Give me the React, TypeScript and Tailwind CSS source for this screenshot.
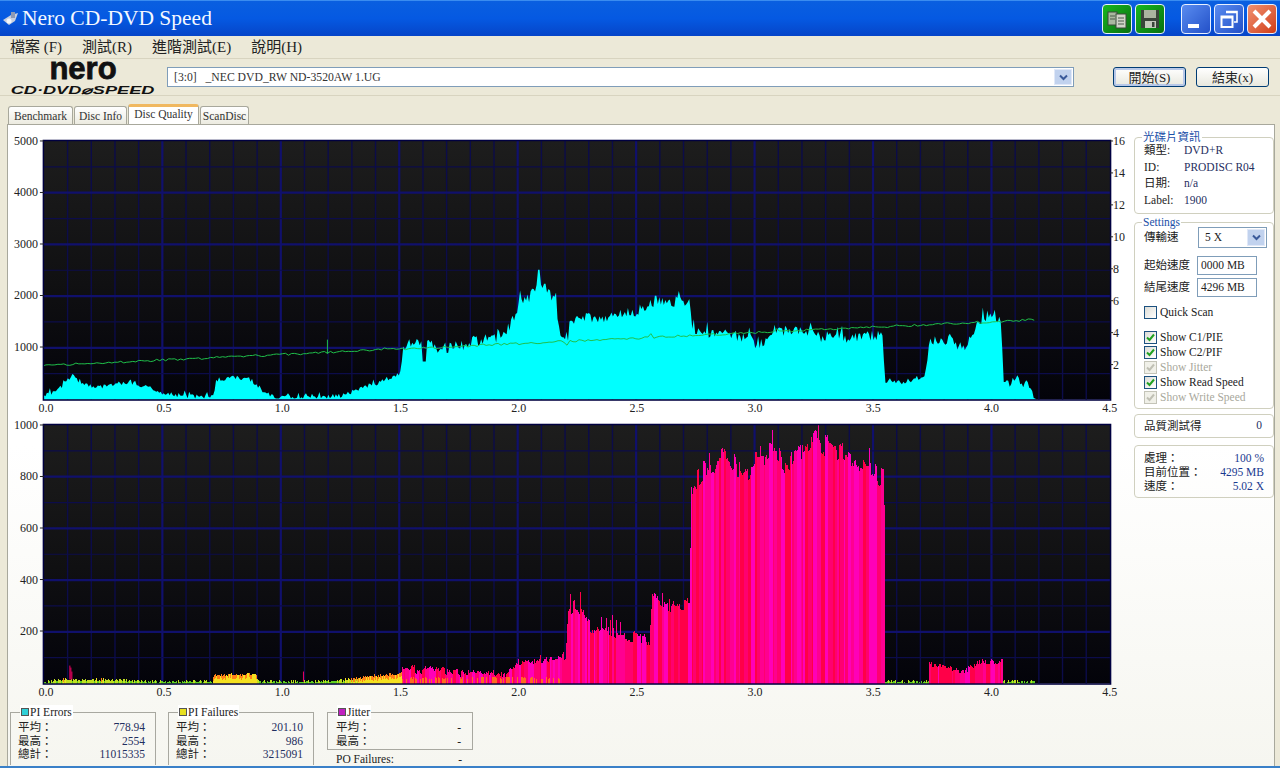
import React from "react";

const FONT = "font-['Liberation_Serif','Noto_Sans_CJK_TC',serif]";

function rng(seed: number) {
  let s = seed;
  return () => {
    s = (s * 1664525 + 1013904223) % 4294967296;
    return s / 4294967296;
  };
}

function interp(points: number[][], x: number) {
  for (let i = 1; i < points.length; i++) {
    if (x <= points[i][0]) {
      const [x0, y0] = points[i - 1];
      const [x1, y1] = points[i];
      if (x1 === x0) return y1;
      return y0 + ((y1 - y0) * (x - x0)) / (x1 - x0);
    }
  }
  return points[points.length - 1][1];
}

// chart outlines, read off the picture in page pixels
const PIE: number[][] = [
  [43, 397], [52, 392], [60, 388], [72, 375], [80, 384], [95, 388], [115, 384], [135, 383], [150, 390], [170, 395], [190, 397],
  [213, 397], [215, 381], [230, 377], [250, 380], [262, 391], [275, 398], [300, 398], [340, 396], [365, 388], [395, 376], [401, 372],
  [402, 346], [425, 342], [440, 350], [460, 346], [475, 341], [500, 337], [510, 325], [520, 303], [528, 300], [535, 290], [543, 290],
  [556, 298], [559, 335], [568, 336], [570, 319], [590, 318], [610, 318], [635, 312], [655, 303], [675, 302], [690, 302],
  [693, 332], [720, 335], [745, 337], [760, 346], [775, 331], [800, 330], [825, 338], [850, 338], [884, 335], [885, 383],
  [900, 383], [925, 378], [930, 341], [950, 340], [965, 351], [982, 320], [992, 313], [1002, 320], [1004, 386], [1020, 380], [1030, 388], [1037, 396],
];

const PIF: number[][] = [
  [402, 669], [440, 670], [480, 674], [505, 672], [520, 662], [565, 655], [568, 612], [578, 602], [590, 625], [620, 630], [650, 638],
  [653, 590], [670, 610], [690, 600], [692, 482], [720, 452], [745, 470], [770, 446], [790, 462], [815, 436], [850, 456], [884, 476], [885, 510], [885.5, 684],
];

const LOW: number[][] = [
  [43, 683], [60, 680], [110, 680], [150, 682], [212, 682], [214, 675], [256, 675], [258, 682], [300, 682], [340, 681], [360, 678], [385, 675], [402, 674],
];

const PIF_TAIL: number[][] = [
  [886, 682], [928, 681], [930, 662], [945, 664], [962, 670], [980, 660], [1003, 658], [1004, 682], [1036, 682],
];

function Grid({ top }: { top: number }) {
  const v: React.ReactNode[] = [];
  for (let i = 1; i < 45; i++) {
    const x = 43 + i * 23.73;
    const major = i % 5 === 0;
    v.push(<line key={"v" + i} x1={x} x2={x} y1={top} y2={top + 259} stroke={major ? "#10106c" : "#0c0c4a"} strokeWidth={major ? 2.2 : 1.4} />);
  }
  for (let i = 1; i < 10; i++) {
    const y = top + i * 25.9;
    const major = i % 2 === 0;
    v.push(<line key={"h" + i} x1={43} x2={1111} y1={y} y2={y} stroke={major ? "#10106c" : "#0c0c4a"} strokeWidth={major ? 2.2 : 1.2} />);
  }
  return <>{v}</>;
}

function Labels({ top, left, right }: { top: number; left: string[]; right?: string[] }) {
  const xs = ["0.0", "0.5", "1.0", "1.5", "2.0", "2.5", "3.0", "3.5", "4.0", "4.5"];
  return (
    <g fontSize={12} fill="#222" fontFamily="'Liberation Serif','Noto Sans CJK TC',serif">
      {left.map((t, i) => (
        <g key={t}>
          <path d={`M39 ${top + i * 51.6}H43`} stroke="#222" />
          <text x={37} y={top + 4 + i * 51.6} textAnchor="end">{t}</text>
        </g>
      ))}
      {(right ?? []).map((t, i) => (
        <g key={t}>
          <path d={`M1111 ${top + i * 32}H1114`} stroke="#222" />
          <text x={1114} y={top + 4 + i * 32} textAnchor="start">{t}</text>
        </g>
      ))}
      {xs.map((t, i) => (
        <text key={t} x={45 + i * 118.4} y={top + 271} textAnchor="middle">{t}</text>
      ))}
    </g>
  );
}

function Backdrop({ id, top }: { id: string; top: number }) {
  return (
    <>
      <defs>
        <linearGradient id={id} x1="0" y1="0" x2="0" y2="1">
          <stop offset="0" stopColor="#1d1d1d" />
          <stop offset="0.55" stopColor="#101012" />
          <stop offset="1" stopColor="#03030a" />
        </linearGradient>
      </defs>
      <rect x={43} y={top} width={1068} height={259} fill={`url(#${id})`} />
    </>
  );
}

function TopChart() {
  const r = rng(7);
  let d = "M43 400";
  for (let x = 43; x <= 1037; x += 1.5) {
    let y = interp(PIE, x);
    const amp = x < 400 ? 3 : x > 885 && x < 928 ? 3 : 7;
    y += (r() - 0.5) * amp * 1.6 + (r() > 0.93 ? -amp : 0);
    if (x >= 538 && x < 540) y = 270;
    if (x >= 543 && x < 546) y = 284;
    if (x >= 655 && x < 657) y = 296;
    if (x >= 422 && x < 426) y = 362;
    d += ` L${x} ${Math.min(399, y).toFixed(1)}`;
  }
  d += " L1037 400 Z";
  const r2 = rng(21);
  let line = "M43 366";
  for (let x = 45; x <= 1035; x += 3) {
    const y = 366 - ((x - 43) / 992) * 46 + (r2() - 0.5) * 2.2 + (r2() > 0.97 ? (r2() - 0.5) * 6 : 0);
    line += ` L${x} ${y.toFixed(1)}`;
  }
  return (
    <svg width={1127} height={293} viewBox="7 124 1127 293" className="block">
      <Backdrop id="topbg" top={141} />
      <Grid top={141} />
      <path d={d} fill="#00ffff" />
      <path d={line} fill="none" stroke="#1fc04a" strokeWidth={1} />
      <path d="M327 340 V354" stroke="#1fc04a" />
      <rect x={42.5} y={140.5} width={1069} height={260} fill="none" stroke="#000040" strokeWidth={1.5} />
      <Labels top={141} left={["5000", "4000", "3000", "2000", "1000"]} right={["16", "14", "12", "10", "8", "6", "4", "2"]} />
    </svg>
  );
}

function BottomChart() {
  const r = rng(11);
  const colors = ["#ff0090", "#ff00b8", "#ff0048", "#ff0070"];
  const paths: string[] = ["", "", "", ""];
  let left = 0;
  let c = 0;
  let off = 0;
  for (let x = 402; x <= 885; x++) {
    if (left-- <= 0) {
      c = Math.floor(r() * 4);
      left = Math.floor(r() * 4);
      off = (r() - 0.35) * (x > 692 ? 22 : x > 568 ? 14 : 6);
    }
    const base = interp(PIF, x);
    const spike = x > 568 && r() > 0.94 ? -14 : 0;
    const y = Math.min(683, base + off + spike + (r() - 0.5) * 4);
    paths[c] += `M${x} ${y.toFixed(1)}V684`;
  }
  for (let x = 930; x <= 1003; x++) {
    if (left-- <= 0) {
      c = Math.floor(r() * 4);
      left = Math.floor(r() * 5);
    }
    const y = interp(PIF_TAIL, x) + r() * 6;
    paths[c] += `M${x} ${y.toFixed(1)}V684`;
  }
  let green = "";
  let yellow = "";
  let orange = "";
  let lime = "";
  const column = (x: number, base: number) => {
    const y = Math.min(683, base + (r() - 0.5) * 3);
    const h = 684 - y;
    if (h < 3) {
      green += `M${x} ${y.toFixed(1)}V684`;
    } else if (h < 5) {
      lime += `M${x} ${y.toFixed(1)}V684`;
    } else {
      yellow += `M${x} ${(y + 2).toFixed(1)}V684`;
      if (r() > 0.35) orange += `M${x} ${y.toFixed(1)}V${(y + 4).toFixed(1)}`;
      else yellow += `M${x} ${y.toFixed(1)}V${(y + 2).toFixed(1)}`;
    }
  };
  for (let x = 43; x < 402; x++) column(x, interp(LOW, x));
  for (let x = 886; x < 930; x++) column(x, 682);
  for (let x = 1004; x < 1036; x++) column(x, 682);
  let foot = "";
  for (let x = 402; x < 560; x += 1) {
    if (r() > 0.6) foot += `M${x} ${(680 - r() * 3).toFixed(1)}V684`;
  }
  return (
    <svg width={1127} height={289} viewBox="7 417 1127 289" className="block">
      <Backdrop id="botbg" top={425} />
      <Grid top={425} />
      {paths.map((p, i) => (
        <path key={i} d={p} stroke={colors[i]} strokeWidth={1} shapeRendering="crispEdges" />
      ))}
      <path d={green} stroke="#60d020" shapeRendering="crispEdges" />
      <path d={lime} stroke="#c0e020" shapeRendering="crispEdges" />
      <path d={yellow} stroke="#f4e020" shapeRendering="crispEdges" />
      <path d={orange} stroke="#ff8018" shapeRendering="crispEdges" />
      <path d={foot} stroke="#ff6a20" shapeRendering="crispEdges" />
      <path d="M69 666V680M70 668V680M71 672V680M303 672V682" stroke="#f00060" />
      <rect x={42.5} y={424.5} width={1069} height={260} fill="none" stroke="#000040" strokeWidth={1.5} />
      <Labels top={425} left={["1000", "800", "600", "400", "200"]} />
    </svg>
  );
}

function Check({ label, on, disabled }: { label: string; on?: boolean; disabled?: boolean }) {
  return (
    <div className={`flex items-center gap-[2px] h-[15px] ${disabled ? "text-[#a8a89c]" : "text-[#222]"}`}>
      <span className={`flex items-center justify-center w-[13px] h-[13px] border ${disabled ? "border-[#c4c4b8] bg-[#f0f0e8]" : "border-[#1c5180] bg-gradient-to-br from-[#dcdcd6] to-white"}`}>
        {on && (
          <svg width="9" height="9" viewBox="0 0 9 9">
            <path d="M1 4.5 L3.5 7 L8 1.5" fill="none" stroke={disabled ? "#c0c0b4" : "#21a121"} strokeWidth="2" />
          </svg>
        )}
      </span>
      <span className="pl-[1px]">{label}</span>
    </div>
  );
}

function Group({ legend, className, children }: { legend?: React.ReactNode; className: string; children: React.ReactNode }) {
  return (
    <div className={`relative border border-[#d0d0bf] rounded-[4px] ${className}`}>
      {legend}
      {children}
    </div>
  );
}

function Legend({ text }: { text: string }) {
  return <span className="absolute left-[7px] top-[-8px] bg-white px-[1px] leading-[14px] text-[#1a4fa8]">{text}</span>;
}

function Chevron() {
  return (
    <span className="flex items-center justify-center w-[18px] h-full bg-[#c1d2ee] border border-[#e0e8f8]">
      <svg width="9" height="7" viewBox="0 0 9 7">
        <path d="M1 1.5 L4.5 5 L8 1.5" fill="none" stroke="#3a5a9a" strokeWidth="2" />
      </svg>
    </span>
  );
}

function Stat({ name, swatch, rows }: { name: string; swatch: string; rows: string[][] }) {
  return (
    <div className="relative w-[146px] h-[53px] border border-b-0 border-[#a8a8a0] pt-[8px] pl-[7px] pr-[10px]">
      <span className="absolute left-[9px] top-[-8px] flex items-center gap-[1px] bg-white px-[1px] leading-[14px] text-[#222]">
        <span className={`w-[8px] h-[8px] border border-[#555] ${swatch}`} />
        {name}
      </span>
      {rows.map(([k, v]) => (
        <div key={k} className="flex justify-between h-[13.5px] leading-[13.5px] text-[#222]">
          <span>{k}</span>
          <span className="text-[#1f2f5f]">{v}</span>
        </div>
      ))}
    </div>
  );
}

function WinBtn({ className, children }: { className: string; children: React.ReactNode }) {
  return (
    <div className={`flex items-center justify-center w-[30px] h-[30px] rounded-[4px] border border-[#e8f0ff] ${className}`}>
      {children}
    </div>
  );
}

export default function App() {
  return (
    <div className={`w-[1280px] h-[768px] overflow-hidden flex flex-col bg-[#ece9d8] text-[11.5px] ${FONT}`}>
      <div className="h-[36px] shrink-0 flex items-center bg-gradient-to-b from-[#0a5fe0] via-[#0559e2] to-[#0645c8] border-t border-[#3a8cf0]">
        <svg width="18" height="18" viewBox="0 0 18 18" className="ml-[2px]">
          <path d="M1 10 L9 5 L16 3 L13 11 L7 15 Z" fill="#c6cfe0" />
          <path d="M9 2 L13 2 L13 8 L9 8 Z" fill="#8d9ab5" />
          <circle cx="7" cy="11" r="2.5" fill="#f4f6fa" />
        </svg>
        <span className="ml-[2px] -mt-[1px] text-[21.5px] text-[#f4f8ff]">Nero CD-DVD Speed</span>
        <div className="ml-auto flex items-center gap-[3px] pr-[3px]">
          <WinBtn className="bg-gradient-to-br from-[#18b820] to-[#087010]">
            <svg width="22" height="20" viewBox="0 0 22 20">
              <rect x="2" y="3" width="9" height="13" fill="#aab8a0" stroke="#3a4a3a" />
              <rect x="10" y="5" width="10" height="14" fill="#d0d4c8" stroke="#3a4a3a" />
              <path d="M12 9H18M12 12H18M12 15H18M4 7H9M4 10H9" stroke="#4a5a4a" />
            </svg>
          </WinBtn>
          <WinBtn className="bg-gradient-to-br from-[#18b820] to-[#087010] mr-[13px]">
            <svg width="22" height="22" viewBox="0 0 22 22">
              <path d="M2 2H20V20H2Z" fill="#3a443a" />
              <rect x="5" y="2" width="12" height="8" fill="#aab4a0" />
              <rect x="6" y="13" width="11" height="7" fill="#c4c8bc" />
              <rect x="13" y="14" width="2.5" height="5" fill="#3a443a" />
            </svg>
          </WinBtn>
          <WinBtn className="bg-gradient-to-br from-[#5a8cf0] to-[#2450c8]">
            <span className="w-[11px] h-[4px] bg-white mt-[14px] mr-[6px]" />
          </WinBtn>
          <WinBtn className="bg-gradient-to-br from-[#5a8cf0] to-[#2450c8]">
            <svg width="20" height="20" viewBox="0 0 20 20" fill="none" stroke="#fff">
              <path d="M2.5 7.5H13.5V18H2.5Z M2.5 8.5H13.5" strokeWidth="2" />
              <path d="M7 2.5H18V13H15 M7 3.5H18" strokeWidth="1.6" />
            </svg>
          </WinBtn>
          <WinBtn className="bg-gradient-to-br from-[#f09070] to-[#d03a10]">
            <svg width="20" height="20" viewBox="0 0 20 20">
              <path d="M2 2 L18 18 M18 2 L2 18" stroke="#fff" strokeWidth="4" />
            </svg>
          </WinBtn>
        </div>
      </div>

      <div className="h-[22px] shrink-0 flex items-center pl-[10px] gap-[20px] text-[15px] text-[#222]">
        <span>檔案 (F)</span>
        <span>測試(R)</span>
        <span>進階測試(E)</span>
        <span>說明(H)</span>
      </div>

      <div className="h-[38px] shrink-0 flex items-center border-t border-b border-[#d8d4c0] pl-[10px] pr-[11px]">
        <div className="w-[146px] flex flex-col items-center text-[#111] font-['Liberation_Sans',sans-serif]">
          <span className="text-[31px] font-bold h-[20px] leading-[20px] [-webkit-text-stroke:0.8px_#111]">nero</span>
          <span className="mt-[6px] text-[11px] font-bold italic h-[10px] leading-[10px] whitespace-nowrap scale-x-[1.65]">CD·DVD⌀SPEED</span>
        </div>
        <div className="ml-[11px] w-[907px] h-[20px] flex items-center justify-between bg-white border border-[#7f9db9] pl-[6px] pr-[1px] py-[1px] text-[11.7px] text-[#333]">
          <span className="whitespace-pre pt-[2px]">[3:0]   _NEC DVD_RW ND-3520AW 1.UG</span>
          <Chevron />
        </div>
        <div className="ml-auto flex gap-[10px]">
          <button className="w-[73px] h-[20px] rounded-[3px] border border-[#003c74] bg-gradient-to-b from-white to-[#e8e8de] shadow-[inset_0_0_0_2px_#b8c8e8] text-[13px] text-[#222]">開始(S)</button>
          <button className="w-[73px] h-[20px] rounded-[3px] border border-[#003c74] bg-gradient-to-b from-white to-[#e8e8de] text-[13px] text-[#222]">結束(x)</button>
        </div>
      </div>

      <div className="h-[28px] shrink-0 flex items-end pl-[8px] gap-[1px] text-[#333]">
        <span className="w-[65px] h-[18px] text-center leading-[18px] border border-b-0 border-[#a8a89c] rounded-t-[3px] bg-gradient-to-b from-white to-[#ecebe0]">Benchmark</span>
        <span className="w-[53px] h-[18px] text-center leading-[18px] border border-b-0 border-[#a8a89c] rounded-t-[3px] bg-gradient-to-b from-white to-[#ecebe0]">Disc Info</span>
        <span className="w-[71px] h-[20px] text-center leading-[15px] border border-b-0 border-[#a8a89c] border-t-[3px] border-t-[#f0b860] rounded-t-[3px] bg-white">Disc Quality</span>
        <span className="w-[49px] h-[18px] text-center leading-[18px] border border-b-0 border-[#a8a89c] rounded-t-[3px] bg-gradient-to-b from-white to-[#ecebe0]">ScanDisc</span>
      </div>

      <div className="ml-[7px] mr-[5px] flex-1 min-h-0 flex bg-gradient-to-b from-white via-white to-[#f6f6f0] border-t border-l border-r border-[#a8a89c]">
        <div className="w-[1127px] shrink-0 flex flex-col -mt-[1px] -ml-[1px]">
          <TopChart />
          <BottomChart />
          <div className="flex pl-[3px] gap-[12px] pt-[7px]">
            <Stat name="PI Errors" swatch="bg-[#30d0d8]" rows={[["平均：", "778.94"], ["最高：", "2554"], ["總計：", "11015335"]]} />
            <Stat name="PI Failures" swatch="bg-[#e8e020]" rows={[["平均：", "201.10"], ["最高：", "986"], ["總計：", "3215091"]]} />
            <div className="w-[146px] ml-[1px]">
              <div className="relative h-[38px] border border-[#a8a8a0] pt-[8px] pl-[8px] pr-[11px]">
                <span className="absolute left-[9px] top-[-8px] flex items-center gap-[1px] bg-white px-[1px] leading-[14px] text-[#222]">
                  <span className="w-[8px] h-[8px] border border-[#555] bg-[#c020c0]" />
                  Jitter
                </span>
                <div className="flex justify-between h-[13.5px] leading-[13.5px] text-[#222]"><span>平均：</span><span>-</span></div>
                <div className="flex justify-between h-[13.5px] leading-[13.5px] text-[#222]"><span>最高：</span><span>-</span></div>
              </div>
              <div className="flex justify-between pl-[9px] pr-[11px] pt-[2px] leading-[14px] text-[#222]"><span>PO Failures:</span><span>-</span></div>
            </div>
          </div>
        </div>

        <div className="flex-1 min-w-0 pt-[12px] flex flex-col">
          <Group className="w-[140px] h-[77px] pt-[4px] pl-[9px] text-[#222]" legend={<Legend text="光碟片資訊" />}>
            {[["類型:", "DVD+R"], ["ID:", "PRODISC R04"], ["日期:", "n/a"], ["Label:", "1900"]].map(([k, v]) => (
              <div key={k} className="flex h-[16.6px] leading-[16.6px]">
                <span className="w-[40px]">{k}</span>
                <span className="text-[#1f2f5f]">{v}</span>
              </div>
            ))}
          </Group>

          <Group className="mt-[8px] w-[140px] h-[187px] pl-[9px] pt-[4px] text-[#222]" legend={<Legend text="Settings" />}>
            <div className="flex items-center h-[21px]">
              <span className="w-[54px]">傳輸速</span>
              <div className="w-[69px] h-[21px] flex items-center justify-between border border-[#7f9db9] pl-[6px] pr-[1px] py-[1px]">
                <span>5 X</span>
                <Chevron />
              </div>
            </div>
            <div className="flex items-center h-[19px] mt-[8px]">
              <span className="w-[53px]">起始速度</span>
              <span className="w-[60px] h-[19px] border border-[#7f9db9] pl-[3px] leading-[17px]">0000 MB</span>
            </div>
            <div className="flex items-center h-[19px] mt-[3px]">
              <span className="w-[53px]">結尾速度</span>
              <span className="w-[60px] h-[19px] border border-[#7f9db9] pl-[3px] leading-[17px]">4296 MB</span>
            </div>
            <div className="mt-[8px]">
              <Check label="Quick Scan" />
            </div>
            <div className="mt-[10px] flex flex-col">
              <Check label="Show C1/PIE" on />
              <Check label="Show C2/PIF" on />
              <Check label="Show Jitter" on disabled />
              <Check label="Show Read Speed" on />
              <Check label="Show Write Speed" on disabled />
            </div>
          </Group>

          <Group className="mt-[5px] w-[140px] h-[24px] flex items-center justify-between pl-[9px] pr-[11px] text-[#222]">
            <span className="pt-[1px]">品質測試得</span>
            <span className="text-[#1f2f5f]">0</span>
          </Group>

          <Group className="mt-[7px] w-[140px] h-[53px] pt-[5px] pl-[9px] pr-[9px] text-[#222]">
            {[["處理：", "100 %"], ["目前位置：", "4295 MB"], ["速度：", "5.02 X"]].map(([k, v]) => (
              <div key={k} className="flex justify-between h-[14px] leading-[14px]">
                <span>{k}</span>
                <span className="text-[#1a3a90]">{v}</span>
              </div>
            ))}
          </Group>
        </div>
      </div>
      <div className="h-[2px] shrink-0 bg-[#3a80c8]" />
    </div>
  );
}
